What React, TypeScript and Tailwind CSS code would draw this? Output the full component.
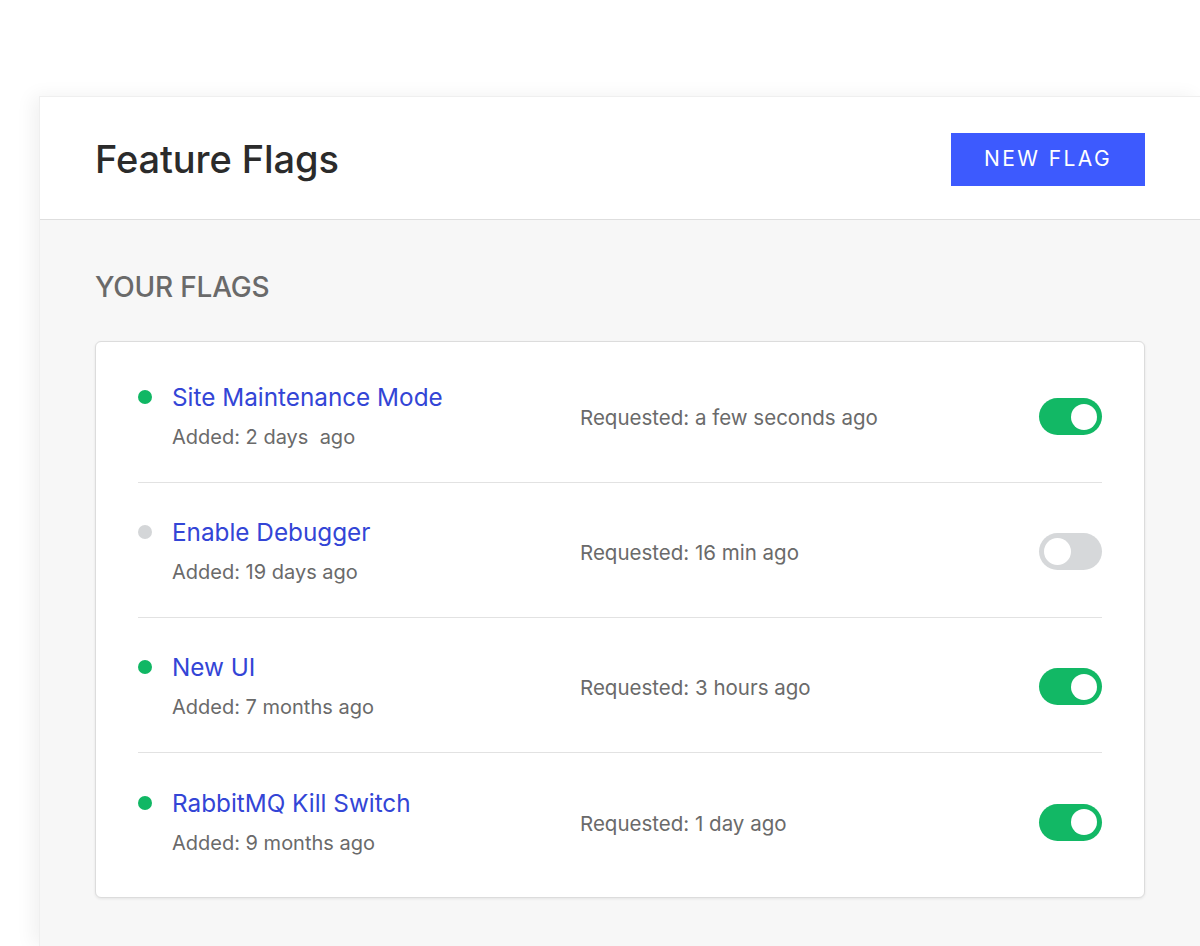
import React from "react";

const flags = [
  { name: "Site Maintenance Mode", added: "Added: 2 days\u00a0 ago", requested: "Requested: a few seconds ago", on: true },
  { name: "Enable Debugger", added: "Added: 19 days ago", requested: "Requested: 16 min ago", on: false },
  { name: "New UI", added: "Added: 7 months ago", requested: "Requested: 3 hours ago", on: true },
  { name: "RabbitMQ Kill Switch", added: "Added: 9 months ago", requested: "Requested: 1 day ago", on: true },
];

function Toggle({ on }: { on: boolean }) {
  return on ? (
    <div className="w-[63px] h-[37px] mt-[3px] rounded-full bg-[#12b865] flex items-center justify-end pr-[5px]">
      <div className="w-[26px] h-[26px] rounded-full bg-white" />
    </div>
  ) : (
    <div className="w-[63px] h-[37px] mt-[3px] rounded-full bg-[#d6d8da] flex items-center justify-start pl-[5px]">
      <div className="w-[27px] h-[27px] rounded-full bg-white" />
    </div>
  );
}

export default function App() {
  return (
    <div
      className="w-[1200px] h-[946px] bg-white overflow-hidden flex flex-col pt-[96px] pl-[39px]"
      style={{ fontFamily: "Inter, 'Noto Sans', sans-serif" }}
    >
      <div className="flex-1 flex flex-col bg-[#f7f7f7] border-l border-t border-[#efefef] shadow-[-6px_0_18px_rgba(0,0,0,0.06)]">
        <div className="h-[123px] bg-white border-b border-[#dedede] flex items-center justify-between pl-[55px] pr-[55px]">
          <h1 className="text-[38px] font-medium text-[#2b2b2b] tracking-[-0.1px] mt-[2px]">Feature Flags</h1>
          <button className="w-[194px] h-[53px] bg-[#3d5afe] text-white text-[21px] tracking-[2.4px] mt-[2px]">
            NEW FLAG
          </button>
        </div>
        <div className="pl-[55px] pr-[55px] pt-[51px]">
          <div className="text-[28px] leading-[32px] font-medium text-[#6a6a6a] tracking-[-0.2px]">YOUR FLAGS</div>
          <div className="mt-[38px] bg-white border border-[#dcdcdc] rounded-[6px] shadow-[0_1px_3px_rgba(0,0,0,0.08)] pt-[6px] pb-[9px]">
            {flags.map((f, i) => (
              <div
                key={f.name}
                className={`mx-[42px] h-[135px] flex items-center ${i < flags.length - 1 ? "border-b border-[#e2e2e2]" : ""}`}
              >
                <div className="w-[442px] flex items-start">
                  <div className={`w-[14px] h-[14px] rounded-full mt-[9px] ${f.on ? "bg-[#10b764]" : "bg-[#d4d6d8]"}`} />
                  <div className="ml-[20px] flex flex-col mt-[1px]">
                    <div className="text-[24.3px] leading-[30px] text-[#3345d6]">{f.name}</div>
                    <div className="text-[20px] leading-[24px] mt-[13px] text-[#6a6a6a] whitespace-pre">{f.added}</div>
                  </div>
                </div>
                <div className="flex-1 text-[20.5px] text-[#6a6a6a] mt-[7px]">{f.requested}</div>
                <Toggle on={f.on} />
              </div>
            ))}
          </div>
        </div>
      </div>
    </div>
  );
}
